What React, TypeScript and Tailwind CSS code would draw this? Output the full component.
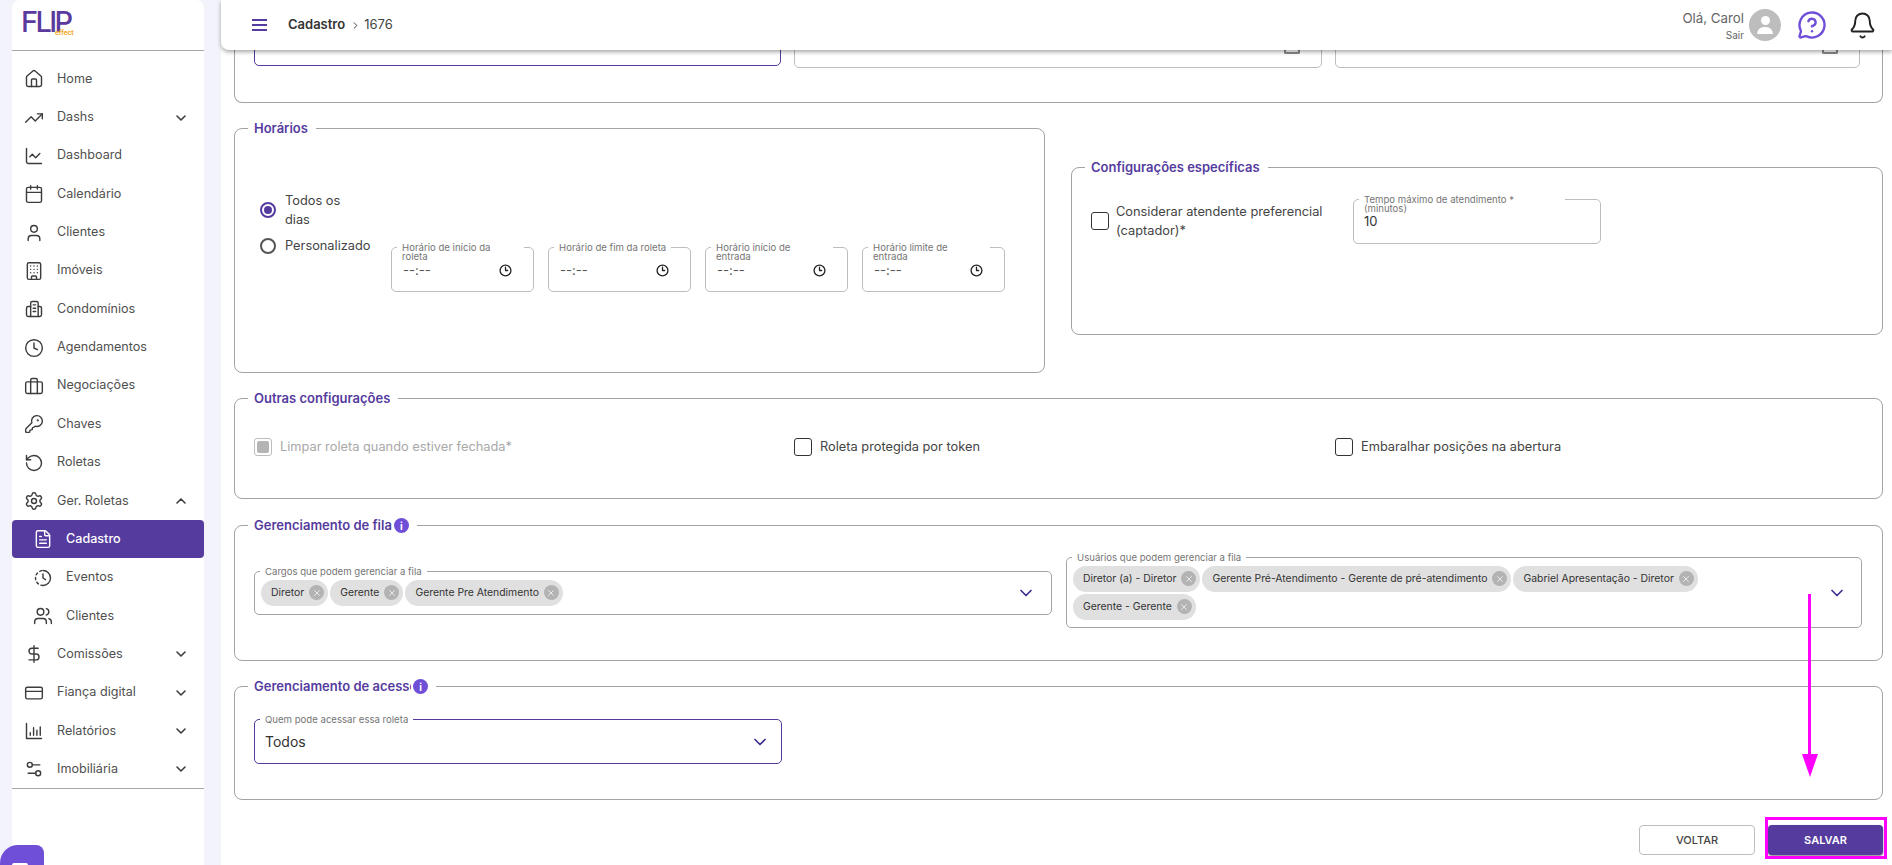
import type { ReactNode } from "react";
import {
  Bell,
  Building,
  Calendar,
  ChartLine,
  ChevronDown,
  ChevronRight,
  ChevronUp,
  Clock,
  Clock3,
  CreditCard,
  DollarSign,
  FileText,
  House,
  KeyRound,
  MessageCircleQuestion,
  RotateCcw,
  Settings,
  Settings2,
  TrendingUp,
  User,
  Users,
  X,
} from "lucide-react";

type IconProps = { size?: number; strokeWidth?: number; className?: string };

function Svg({ size = 20, strokeWidth = 1.7, className, children }: IconProps & { children: ReactNode }) {
  return (
    <svg
      width={size}
      height={size}
      viewBox="0 0 24 24"
      fill="none"
      stroke="currentColor"
      strokeWidth={strokeWidth}
      strokeLinecap="round"
      strokeLinejoin="round"
      className={className}
    >
      {children}
    </svg>
  );
}

const CondoIcon = (p: IconProps) => (
  <Svg {...p}>
    <path d="M8 21V5a2 2 0 0 1 2-2h5a2 2 0 0 1 2 2v16" />
    <path d="M17 9h2a2 2 0 0 1 2 2v8a2 2 0 0 1-2 2H5a2 2 0 0 1-2-2v-8a2 2 0 0 1 2-2h3" />
    <path d="M11 7h3M11 11h3M11 15h3" />
  </Svg>
);

const CaseIcon = (p: IconProps) => (
  <Svg {...p}>
    <rect x="2" y="7" width="20" height="14" rx="2" />
    <path d="M8 7V5a2 2 0 0 1 2-2h4a2 2 0 0 1 2 2v2" />
    <path d="M8 7v14M16 7v14" />
  </Svg>
);

const EventsIcon = (p: IconProps) => (
  <Svg {...p}>
    <path d="M12 3a9 9 0 0 1 0 18" />
    <path d="M12 21a9 9 0 0 1 0-18" strokeDasharray="2.6 3.4" />
    <path d="M12 7v5l3 2" />
  </Svg>
);

const ReportsIcon = (p: IconProps) => (
  <Svg {...p}>
    <path d="M3 3v18h18" />
    <path d="M7.5 17v-3M11.5 17V8M15.5 17v-6M19.5 17V7" />
  </Svg>
);

const menu = [
  { icon: House, label: "Home" },
  { icon: TrendingUp, label: "Dashs", caret: "down" },
  { icon: ChartLine, label: "Dashboard" },
  { icon: Calendar, label: "Calendário" },
  { icon: User, label: "Clientes" },
  { icon: Building, label: "Imóveis" },
  { icon: CondoIcon, label: "Condomínios" },
  { icon: Clock, label: "Agendamentos" },
  { icon: CaseIcon, label: "Negociações" },
  { icon: KeyRound, label: "Chaves" },
  { icon: RotateCcw, label: "Roletas" },
  { icon: Settings, label: "Ger. Roletas", caret: "up" },
  { icon: FileText, label: "Cadastro", sub: true, active: true },
  { icon: EventsIcon, label: "Eventos", sub: true },
  { icon: Users, label: "Clientes", sub: true },
  { icon: DollarSign, label: "Comissões", caret: "down" },
  { icon: CreditCard, label: "Fiança digital", caret: "down" },
  { icon: ReportsIcon, label: "Relatórios", caret: "down" },
  { icon: Settings2, label: "Imobiliária", caret: "down" },
];

function Sidebar() {
  return (
    <aside className="ml-3 flex w-[192px] shrink-0 flex-col rounded-t-lg bg-white">
      <div className="relative h-[51px] shrink-0 border-b border-[#a8a8a8] pl-[9px] pt-[4px]">
        <span className="block text-[29px] font-medium leading-[36px] tracking-[-0.09em] text-[#5b3a9e]">FLIP</span>
        <span className="absolute left-[43px] top-[29px] text-[6.5px] font-bold leading-[8px] text-[#f5a623]">effect</span>
      </div>
      <nav className="h-[738px] border-b border-[#a8a8a8] pt-[9px]">
        {menu.map((item, i) => (
          <div
            key={i}
            className={`flex h-[38.35px] items-center text-[12.6px] ${
              item.active ? "rounded-[4px] bg-[#553b9e] font-medium text-white" : "text-[#505050]"
            } ${item.sub ? "pl-[21px]" : "pl-[12px]"}`}
          >
            <item.icon size={20} strokeWidth={1.7} className={`shrink-0 ${item.active ? "" : "text-[#3c3c3c]"}`} />
            <span className="ml-[13px] flex-1">{item.label}</span>
            {item.caret === "down" && <ChevronDown size={16} strokeWidth={2.4} className="mr-[15px] text-[#3c3c3c]" />}
            {item.caret === "up" && <ChevronUp size={16} strokeWidth={2.4} className="mr-[15px] text-[#3c3c3c]" />}
          </div>
        ))}
      </nav>
    </aside>
  );
}

function Topbar() {
  return (
    <header className="relative z-10 flex h-[50px] items-center rounded-bl-lg bg-white pl-[31px] pr-[15px] shadow-[0_2px_4px_rgba(0,0,0,0.35)]">
      <div className="flex w-[15px] flex-col gap-[3px]">
        <span className="h-[2px] bg-[#553b9e]" />
        <span className="h-[2px] bg-[#553b9e]" />
        <span className="h-[2px] bg-[#553b9e]" />
      </div>
      <span className="ml-[21px] text-[13px] font-semibold text-[#333]">Cadastro</span>
      <ChevronRight size={11} className="ml-[5px] text-[#333]" />
      <span className="ml-[3px] text-[13px] text-[#444]">1676</span>

      <div className="ml-auto flex items-center">
        <div className="text-right">
          <div className="text-[13.3px] leading-[18px] text-[#666]">Olá, Carol</div>
          <div className="mt-[2px] text-[10px] leading-[13px] text-[#666]">Sair</div>
        </div>
        <div className="relative ml-[5px] h-8 w-8 overflow-hidden rounded-full bg-[#bdbdbd]">
          <span className="absolute left-[12px] top-[7px] h-[9px] w-[9px] rounded-full bg-white" />
          <span className="absolute left-[8px] top-[18px] h-[7px] w-[16px] rounded-t-full bg-white" />
        </div>
        <MessageCircleQuestion size={30} strokeWidth={1.9} className="ml-4 text-[#6f4fd8]" />
        <Bell size={29} strokeWidth={1.6} className="ml-[21px] text-[#222]" />
      </div>
    </header>
  );
}

function Section({
  title,
  info,
  titleClass,
  className,
  children,
}: {
  title: string;
  info?: boolean;
  titleClass?: string;
  className?: string;
  children: ReactNode;
}) {
  return (
    <fieldset className={`min-w-0 rounded-lg border border-[#a3a3a3] ${className ?? ""}`}>
      <legend className="ml-[13px] flex h-[17px] items-center pl-[6px] pr-[8px]">
        <span className={`overflow-hidden whitespace-nowrap text-[13px] font-semibold leading-[17px] text-[#553b9e] ${titleClass ?? ""}`}>
          {title}
        </span>
        {info && (
          <span className="ml-[2px] flex h-[15px] w-[15px] items-center justify-center rounded-full bg-[#6f4fd8] text-[10px] font-bold leading-none text-white">
            i
          </span>
        )}
      </legend>
      {children}
    </fieldset>
  );
}

function Outlined({
  label,
  labelClass,
  className,
  children,
}: {
  label: ReactNode;
  labelClass?: string;
  className?: string;
  children?: ReactNode;
}) {
  return (
    <div className={`relative rounded-[5px] border ${className ?? "border-[#bdbdbd]"}`}>
      <span className={`absolute left-[5px] top-[-5px] bg-white px-[5px] text-[9.6px] leading-[9px] text-[#757575] ${labelClass ?? ""}`}>
        {label}
      </span>
      {children}
    </div>
  );
}

function TimeField({ label, labelClass }: { label: ReactNode; labelClass: string }) {
  return (
    <Outlined label={label} labelClass={labelClass} className="h-[45px] w-[143px] border-[#bdbdbd]">
      <div className="flex h-full items-center pl-[11px] pr-[21px] pt-[2px] text-[13px] text-[#555]">
        <span className="flex-1">--:--</span>
        <Clock3 size={13} strokeWidth={2.4} className="text-[#222]" />
      </div>
    </Outlined>
  );
}

function Check({ disabled }: { disabled?: boolean }) {
  return disabled ? (
    <span className="flex h-[18px] w-[18px] shrink-0 items-center justify-center rounded-[3px] border border-[#bdbdbd]">
      <span className="h-[12px] w-[12px] rounded-[2px] bg-[#b5b5b5]" />
    </span>
  ) : (
    <span className="h-[18px] w-[18px] shrink-0 rounded-[3px] border-[1.5px] border-[#333]" />
  );
}

function Chip({ label }: { label: string }) {
  return (
    <span className="flex h-[26px] items-center rounded-full bg-[#e0e0e0] pl-[10px] pr-[4px] text-[10.4px] text-[#333]">
      {label}
      <span className="ml-[5px] flex h-[15px] w-[15px] items-center justify-center rounded-full bg-[#b3b3b3]">
        <X size={10} strokeWidth={2.4} className="text-[#e8e8e8]" />
      </span>
    </span>
  );
}

export default function App() {
  return (
    <div className="relative flex h-screen w-full overflow-hidden bg-[#f3f3fb] font-['Inter',sans-serif]">
      <Sidebar />

      <main className="ml-[17px] flex-1 bg-white">
        <Topbar />

        <div className="-mt-5 flex flex-col pl-[13px] pr-[9px]">
          {/* cortado pelo topo ao rolar */}
          <div className="flex h-[73px] items-start gap-[13px] rounded-b-lg border border-t-0 border-[#a3a3a3] pl-[19px]">
            <div className="h-[36px] w-[527px] rounded-b-[5px] border border-[#553b9e]" />
            <div className="relative h-[38px] w-[528px] rounded-b-[5px] border border-[#bdbdbd]">
              <span className="absolute bottom-[13px] right-[21px] h-[5px] w-[16px] rounded-b-[2px] border-2 border-t-0 border-[#888]" />
            </div>
            <div className="relative h-[38px] w-[525px] rounded-b-[5px] border border-[#bdbdbd]">
              <span className="absolute bottom-[13px] right-[21px] h-[5px] w-[16px] rounded-b-[2px] border-2 border-t-0 border-[#888]" />
            </div>
          </div>

          <div className="mt-[17px] flex items-start gap-[26px]">
            <Section title="Horários" className="h-[253px] w-[811px] shrink-0">
              <div className="flex items-start pl-[25px] pt-[54px]">
                <div className="flex w-[131px] shrink-0 flex-col gap-[7px] text-[12.8px] leading-[19px] text-[#444]">
                  <div className="flex items-center gap-[9px]">
                    <span className="flex h-4 w-4 items-center justify-center rounded-full border-2 border-[#553b9e]">
                      <span className="h-2 w-2 rounded-full bg-[#553b9e]" />
                    </span>
                    <span>
                      Todos os
                      <br />
                      dias
                    </span>
                  </div>
                  <div className="flex items-center gap-[9px]">
                    <span className="h-4 w-4 rounded-full border-2 border-[#555]" />
                    <span>Personalizado</span>
                  </div>
                </div>
                <div className="mt-[56px] flex gap-[14px]">
                  <TimeField label={<>Horário de início da<br />roleta</>} labelClass="w-[127px]" />
                  <TimeField label="Horário de fim da roleta" labelClass="whitespace-nowrap" />
                  <TimeField label={<>Horário início de<br />entrada</>} labelClass="w-[122px]" />
                  <TimeField label={<>Horário limite de<br />entrada</>} labelClass="w-[122px]" />
                </div>
              </div>
            </Section>

            <Section title="Configurações específicas" className="mt-[39px] h-[176px] flex-1">
              <div className="flex items-start pl-[19px] pt-[23px]">
                <div className="flex h-[43px] w-[262px] items-center gap-[7px] text-[12.8px] leading-[19px] text-[#444]">
                  <Check />
                  <span>
                    Considerar atendente preferencial
                    <br />
                    (captador)*
                  </span>
                </div>
                <Outlined label={<>Tempo máximo de atendimento *<br />(minutos)</>} labelClass="w-[206px]" className="h-[45px] w-[248px] border-[#bdbdbd]">
                  <div className="pl-[10px] pt-[12px] text-[13px] leading-[18px] text-[#333]">10</div>
                </Outlined>
              </div>
            </Section>
          </div>

          <Section title="Outras configurações" className="mt-[17px] h-[109px]">
            <div className="grid grid-cols-[540px_541px_1fr] pl-[19px] pt-[31px] text-[12.8px] leading-[18px] text-[#444]">
              <div className="flex items-center gap-2 text-[#a8a8a8]">
                <Check disabled />
                Limpar roleta quando estiver fechada*
              </div>
              <div className="flex items-center gap-2">
                <Check />
                Roleta protegida por token
              </div>
              <div className="flex items-center gap-2">
                <Check />
                Embaralhar posições na abertura
              </div>
            </div>
          </Section>

          <Section title="Gerenciamento de fila" info className="mt-[18px] h-[144px]">
            <div className="flex items-center gap-[14px] pl-[19px] pt-[23px]">
              <Outlined label="Cargos que podem gerenciar a fila" className="h-[44px] w-[798px] border-[#a3a3a3]">
                <div className="flex h-full items-center gap-[2px] pl-[6px]">
                  <Chip label="Diretor" />
                  <Chip label="Gerente" />
                  <Chip label="Gerente Pre Atendimento" />
                  <ChevronDown size={20} className="ml-auto mr-[15px] text-[#3f2b8c]" />
                </div>
              </Outlined>
              <Outlined label="Usuários que podem gerenciar a fila" className="h-[71px] w-[796px] border-[#a3a3a3]">
                <div className="flex h-full items-center pl-[6px] pr-[14px]">
                  <div className="flex flex-1 flex-col gap-[2px]">
                    <div className="flex gap-[2px]">
                      <Chip label="Diretor (a) - Diretor" />
                      <Chip label="Gerente Pré-Atendimento - Gerente de pré-atendimento" />
                      <Chip label="Gabriel Apresentação - Diretor" />
                    </div>
                    <div className="flex">
                      <Chip label="Gerente - Gerente" />
                    </div>
                  </div>
                  <ChevronDown size={20} className="text-[#3f2b8c]" />
                </div>
              </Outlined>
            </div>
          </Section>

          <Section title="Gerenciamento de acesso" info titleClass="w-[157px]" className="mt-[17px] h-[122px]">
            <div className="pl-[19px] pt-[24px]">
              <Outlined label="Quem pode acessar essa roleta" className="h-[45px] w-[528px] border-[#553b9e]">
                <div className="flex h-full items-center justify-between pl-[10px] pr-[11px] text-[14px] text-[#333]">
                  Todos
                  <ChevronDown size={20} className="text-[#3f2b8c]" />
                </div>
              </Outlined>
            </div>
          </Section>

          <div className="mt-[25px] flex justify-end gap-[13px]">
            <button className="h-[30px] w-[116px] rounded-[4px] border border-[#bdbdbd] bg-white text-[11px] font-medium text-[#444]">
              VOLTAR
            </button>
            <div className="relative">
              <button className="h-[30px] w-[115px] rounded-[4px] bg-[#553b9e] text-[11px] font-semibold text-white shadow-[0_1px_2px_rgba(0,0,0,0.5)]">
                SALVAR
              </button>
              <span className="absolute bottom-[-4px] left-[-3px] right-[-4px] top-[-8px] border-[3px] border-[#ff00ff]" />
            </div>
          </div>
        </div>
      </main>

      {/* seta de anotação sobre a tela */}
      <svg className="absolute left-[1799px] top-[594px]" width="24" height="186" viewBox="0 0 24 186">
        <rect x="9" y="0" width="3" height="162" fill="#ff00ff" />
        <polygon points="3,160 19,160 11,183" fill="#ff00ff" />
      </svg>

      {/* widget de chat */}
      <div className="absolute bottom-0 left-0 h-5 w-11 rounded-tl-[18px] rounded-tr-lg bg-[#6f4fd8]">
        <span className="absolute bottom-0 left-[12px] h-[2px] w-4 rounded-t-full bg-white" />
      </div>
    </div>
  );
}
